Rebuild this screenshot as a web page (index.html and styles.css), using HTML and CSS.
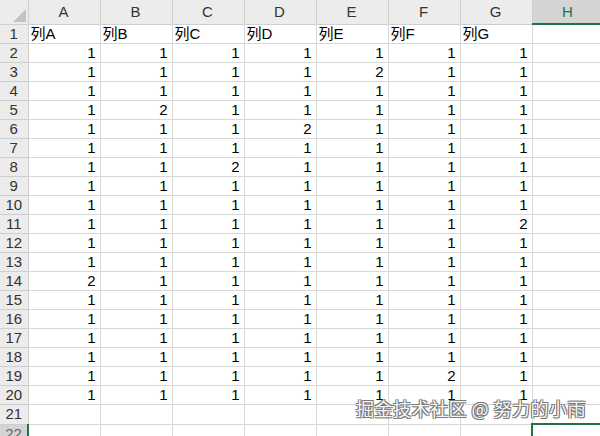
FILE: index.html
```html
<!DOCTYPE html>
<html lang="zh-CN">
<head>
    <meta charset="UTF-8">
    <title>Sheet1</title>
    <link rel="stylesheet" href="styles.css">
</head>
<body>

<div class="sheet-wrap">
    <table class="sheet">
        <colgroup>
            <col class="col-head">
            <col span="8" class="col-cell">
        </colgroup>
        <thead>
            <tr>
                <th class="corner"><span class="tri"></span></th>
                <th>A</th><th>B</th><th>C</th><th>D</th><th>E</th><th>F</th><th>G</th>
                <th class="sel">H</th>
            </tr>
        </thead>
        <tbody>
            <tr><th>1</th><td class="txt">列A</td><td class="txt">列B</td><td class="txt">列C</td><td class="txt">列D</td><td class="txt">列E</td><td class="txt">列F</td><td class="txt">列G</td><td></td></tr>
            <tr><th>2</th><td>1</td><td>1</td><td>1</td><td>1</td><td>1</td><td>1</td><td>1</td><td></td></tr>
            <tr><th>3</th><td>1</td><td>1</td><td>1</td><td>1</td><td>2</td><td>1</td><td>1</td><td></td></tr>
            <tr><th>4</th><td>1</td><td>1</td><td>1</td><td>1</td><td>1</td><td>1</td><td>1</td><td></td></tr>
            <tr><th>5</th><td>1</td><td>2</td><td>1</td><td>1</td><td>1</td><td>1</td><td>1</td><td></td></tr>
            <tr><th>6</th><td>1</td><td>1</td><td>1</td><td>2</td><td>1</td><td>1</td><td>1</td><td></td></tr>
            <tr><th>7</th><td>1</td><td>1</td><td>1</td><td>1</td><td>1</td><td>1</td><td>1</td><td></td></tr>
            <tr><th>8</th><td>1</td><td>1</td><td>2</td><td>1</td><td>1</td><td>1</td><td>1</td><td></td></tr>
            <tr><th>9</th><td>1</td><td>1</td><td>1</td><td>1</td><td>1</td><td>1</td><td>1</td><td></td></tr>
            <tr><th>10</th><td>1</td><td>1</td><td>1</td><td>1</td><td>1</td><td>1</td><td>1</td><td></td></tr>
            <tr><th>11</th><td>1</td><td>1</td><td>1</td><td>1</td><td>1</td><td>1</td><td>2</td><td></td></tr>
            <tr><th>12</th><td>1</td><td>1</td><td>1</td><td>1</td><td>1</td><td>1</td><td>1</td><td></td></tr>
            <tr><th>13</th><td>1</td><td>1</td><td>1</td><td>1</td><td>1</td><td>1</td><td>1</td><td></td></tr>
            <tr><th>14</th><td>2</td><td>1</td><td>1</td><td>1</td><td>1</td><td>1</td><td>1</td><td></td></tr>
            <tr><th>15</th><td>1</td><td>1</td><td>1</td><td>1</td><td>1</td><td>1</td><td>1</td><td></td></tr>
            <tr><th>16</th><td>1</td><td>1</td><td>1</td><td>1</td><td>1</td><td>1</td><td>1</td><td></td></tr>
            <tr><th>17</th><td>1</td><td>1</td><td>1</td><td>1</td><td>1</td><td>1</td><td>1</td><td></td></tr>
            <tr><th>18</th><td>1</td><td>1</td><td>1</td><td>1</td><td>1</td><td>1</td><td>1</td><td></td></tr>
            <tr><th>19</th><td>1</td><td>1</td><td>1</td><td>1</td><td>1</td><td>2</td><td>1</td><td></td></tr>
            <tr><th>20</th><td>1</td><td>1</td><td>1</td><td>1</td><td>1</td><td>1</td><td>1</td><td></td></tr>
            <tr><th>21</th><td></td><td></td><td></td><td></td><td></td><td></td><td></td><td></td></tr>
            <tr><th class="sel-row">22</th><td></td><td></td><td></td><td></td><td></td><td></td><td></td><td class="active"></td></tr>
        </tbody>
    </table>

    <div class="watermark">掘金技术社区 @ 努力的小雨</div>
</div>

</body>
</html>
```

FILE: styles.css
```css
body {
    margin: 0;
    background-color: white;
    font-family: "Liberation Sans", "Noto Sans CJK SC", sans-serif;
    overflow: hidden;
}
.sheet-wrap {
    position: relative;
    width: 600px;
    height: 436px;
    overflow: hidden;
}
.sheet {
    border-collapse: collapse;
    table-layout: fixed;
    width: 604px;
    font-size: 15px;
    color: #000;
}
.col-head {
    width: 28px;
}
.col-cell {
    width: 72px;
}
.sheet th,
.sheet td {
    border: 1px solid #d8d8d8;
    padding: 0 4px 0 3px;
    height: 18px;
    line-height: 18px;
    white-space: nowrap;
    overflow: hidden;
}
.sheet td {
    text-align: right;
}
.sheet td.txt {
    text-align: left;
    padding-left: 2px;
}
.sheet th {
    background-color: #ececec;
    color: #333;
    font-weight: normal;
    border-color: #cfcfcf;
    text-align: center;
}
.sheet thead th {
    height: 23px;
    line-height: 23px;
    border-top: none;
}
.sheet tbody th {
    border-left: none;
    padding: 0;
}
.sheet thead th.sel {
    background-color: #d4d4d4;
    color: #217346;
    border-bottom: 2px solid #217346;
}
.sheet th.corner {
    position: relative;
    border-left: none;
    padding: 0;
}
.tri {
    position: absolute;
    right: 2px;
    bottom: 2px;
    width: 0;
    height: 0;
    border-left: 13px solid transparent;
    border-bottom: 13px solid #c4c4c4;
}
.sheet th.sel-row {
    background-color: #d4d4d4;
    color: #666;
    border-right: 2px solid #217346;
}
.sheet td.active {
    border: 2px solid #217346;
}
.watermark {
    position: absolute;
    right: 14px;
    bottom: 15px;
    font-family: "Noto Sans CJK SC", sans-serif;
    font-size: 18px;
    letter-spacing: 0.5px;
    color: #f6f6f6;
    text-shadow: -1px -1px 0 #7a7a7a, 1px -1px 0 #7a7a7a, -1px 1px 0 #7a7a7a, 1px 1px 0 #7a7a7a;
}
```
